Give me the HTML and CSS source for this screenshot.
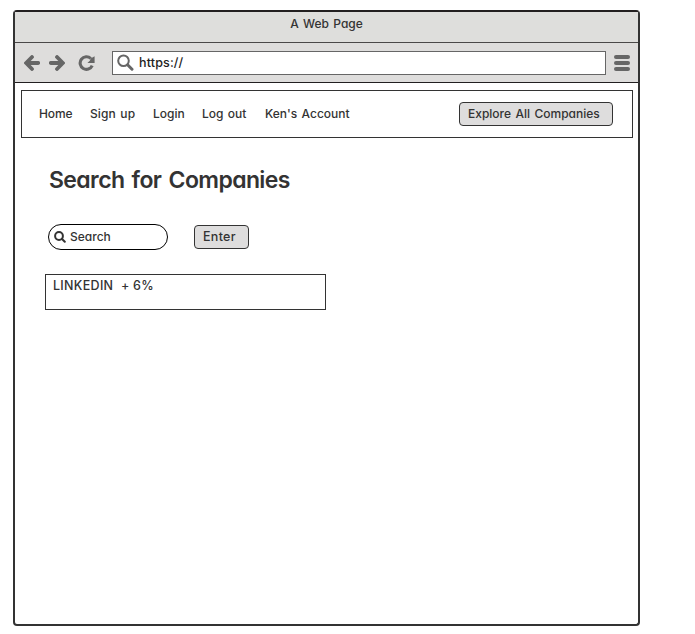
FILE: index.html
```html
<!DOCTYPE html>
<html lang="en">
<head>
<meta charset="utf-8">
<title>A Web Page</title>
<link rel="stylesheet" href="styles.css">
</head>
<body>
<div class="window">
  <header class="titlebar"><span>A Web Page</span></header>
  <div class="toolbar">
    <svg class="arrow" width="16" height="16" viewBox="0 0 16 16"><path d="M8 2L2.2 8L8 14M2.5 8H14.2"/></svg>
    <svg class="arrow forward" width="16" height="16" viewBox="0 0 16 16"><path d="M8 2L13.8 8L8 14M13.5 8H1.8"/></svg>
    <svg class="reload" width="17" height="16" viewBox="0 0 17 16"><path class="ring" d="M14.2 10.6A6.3 6.3 0 1 1 12.8 3.5"/><path class="tip" d="M16.6 1.3V8H9.4L12 5.4L12.6 3.5Z"/></svg>
    <div class="address">
      <svg width="17" height="17" viewBox="0 0 17 17"><circle cx="6.5" cy="6.7" r="5.3"/><path d="M10.8 11L15 15.2"/></svg>
      <span>https://</span>
    </div>
    <div class="menu"><i></i><i></i><i></i></div>
  </div>
  <main>
    <nav>
      <a class="home">Home</a>
      <a class="signup">Sign up</a>
      <a class="login">Login</a>
      <a class="logout">Log out</a>
      <a class="account">Ken's Account</a>
      <button class="explore">Explore All Companies</button>
    </nav>
    <h1>Search for Companies</h1>
    <div class="search-row">
      <div class="search">
        <svg width="12" height="12" viewBox="0 0 12 12"><circle cx="5" cy="5" r="3.9"/><path d="M8 8L10.8 10.8"/></svg>
        <span>Search</span>
      </div>
      <button class="enter">Enter</button>
    </div>
    <div class="result"><span class="company">LINKEDIN</span><span class="plus">+</span><span class="change">6%</span></div>
  </main>
</div>
</body>
</html>
```

FILE: styles.css
```css
* { box-sizing: border-box; }
body {
  margin: 0;
  padding: 10px 0 0 13px;
  background: #fff;
  color: #333;
  font: 500 12px/16px Inter, "Liberation Sans", sans-serif;
  font-feature-settings: "cv11" 1;
  word-spacing: 1.2px;
}
.window {
  width: 627px;
  height: 616px;
  border: 2px solid #333;
  border-top-color: #221f20;
  border-radius: 4px;
}
.titlebar {
  height: 31px;
  padding-top: 4px;
  border-bottom: 1px solid #4a4848;
  background: #dededc;
  text-align: center;
}
.toolbar {
  display: flex;
  align-items: center;
  height: 40px;
  padding-left: 9px;
  border-bottom: 1px solid #221f20;
  background: #dedddc;
}
svg { display: block; flex: none; fill: none; }
.arrow { stroke: #666; stroke-width: 3.8; stroke-linecap: round; }
.forward { margin-left: 9px; }
.reload { margin-left: 13px; }
.ring { stroke: #666; stroke-width: 3.1; }
.tip { fill: #666; }
.address {
  display: flex;
  align-items: center;
  width: 494px;
  height: 24px;
  margin-left: 17px;
  padding-left: 4px;
  border: 1px solid #666;
  background: #fff;
}
.address svg { stroke: #666; stroke-width: 2; }
.address path { stroke-width: 3; stroke-linecap: round; }
.address span { margin: 1px 0 0 5px; color: #222; font-size: 12.5px; letter-spacing: 0.15px; }
.menu { display: grid; gap: 2px; margin-left: 8px; }
.menu i { width: 16px; height: 4px; border-radius: 2px; background: #666; }
main { padding: 7px 5px 0 6px; }
nav {
  display: flex;
  align-items: center;
  gap: 18px;
  height: 48px;
  padding: 0 19px 0 17px;
  border: 1px solid #333;
}
nav a { white-space: nowrap; }
.home { width: 33px; letter-spacing: -0.1px; }
.signup { width: 45px; letter-spacing: 0.1px; }
.login { width: 31px; }
.logout { width: 45px; }
button {
  height: 24px;
  padding: 0 0 0 8px;
  border: 1px solid #333;
  border-radius: 4px;
  background: #dedddd;
  color: inherit;
  font: inherit;
  font-feature-settings: inherit;
  letter-spacing: inherit;
  word-spacing: inherit;
  text-align: left;
  white-space: nowrap;
}
.explore { width: 154px; margin-left: auto; }
h1 {
  margin: 27px 0 0 28px;
  font-size: 23px;
  font-weight: 600;
  line-height: 31px;
  letter-spacing: -0.6px;
  word-spacing: 2px;
}
.search-row { display: flex; align-items: center; margin: 28px 0 0 27px; }
.search {
  display: flex;
  align-items: center;
  width: 120px;
  height: 26px;
  padding-left: 5px;
  border: 1px solid #000;
  border-radius: 13px;
}
.search svg { stroke: #333; stroke-width: 2; stroke-linecap: round; }
.search span { margin-left: 4px; }
.enter { width: 55px; margin-left: 26px; font-size: 12.5px; letter-spacing: 0.3px; }
.result {
  display: flex;
  width: 281px;
  height: 36px;
  margin: 24px 0 0 24px;
  padding: 3px 7px;
  border: 1px solid #333;
  font-size: 12.5px;
}
.company { width: 68px; letter-spacing: 0.3px; }
.plus { width: 12px; }
.change { letter-spacing: 0.4px; }
```
